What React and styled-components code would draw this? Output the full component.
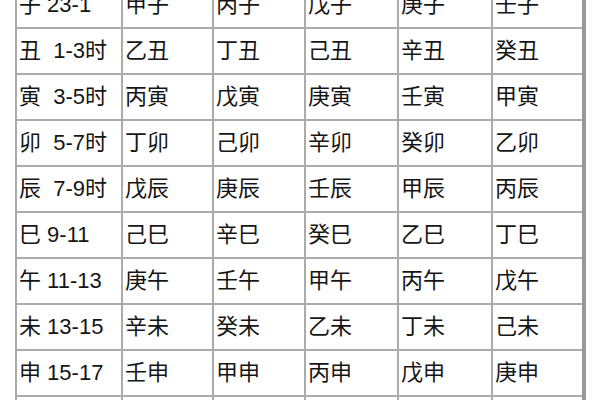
import React from "react";
import styled, { createGlobalStyle } from "styled-components";

const Global = createGlobalStyle`
  html, body { margin: 0; padding: 0; background: #fff; overflow: hidden; }
  body { width: 600px; height: 400px; }
`;

const Page = styled.div`
  width: 600px;
  height: 400px;
  overflow: hidden;
  padding-left: 15px;
  box-sizing: border-box;
`;

const Table = styled.table`
  margin-top: -19px;
  border-collapse: collapse;
  table-layout: fixed;
  font-family: "Liberation Sans", "Noto Sans CJK SC", sans-serif;
  font-size: 22px;
  color: #151515;
  border-right: 4px solid #999;
`;

const Cell = styled.td`
  width: ${(p) => p.$w}px;
  height: 44px;
  padding: 0 0 0 2px;
  border: 2px solid #ababab;
  white-space: pre;
  line-height: 24px;
  vertical-align: middle;
  overflow: hidden;
`;

const widths = [102, 87, 88, 89, 90, 87];

const rows = [
  ["子 23-1", "甲子", "丙子", "戊子", "庚子", "壬子"],
  ["丑  1-3时", "乙丑", "丁丑", "己丑", "辛丑", "癸丑"],
  ["寅  3-5时", "丙寅", "戊寅", "庚寅", "壬寅", "甲寅"],
  ["卯  5-7时", "丁卯", "己卯", "辛卯", "癸卯", "乙卯"],
  ["辰  7-9时", "戊辰", "庚辰", "壬辰", "甲辰", "丙辰"],
  ["巳 9-11", "己巳", "辛巳", "癸巳", "乙巳", "丁巳"],
  ["午 11-13", "庚午", "壬午", "甲午", "丙午", "戊午"],
  ["未 13-15", "辛未", "癸未", "乙未", "丁未", "己未"],
  ["申 15-17", "壬申", "甲申", "丙申", "戊申", "庚申"],
  ["酉 17-19", "癸酉", "乙酉", "丁酉", "己酉", "辛酉"],
];

export default function App() {
  return (
    <Page>
      <Global />
      <Table>
        <tbody>
          {rows.map((r, i) => (
            <tr key={i}>
              {r.map((c, j) => (
                <Cell key={j} $w={widths[j]}>
                  {c}
                </Cell>
              ))}
            </tr>
          ))}
        </tbody>
      </Table>
    </Page>
  );
}
